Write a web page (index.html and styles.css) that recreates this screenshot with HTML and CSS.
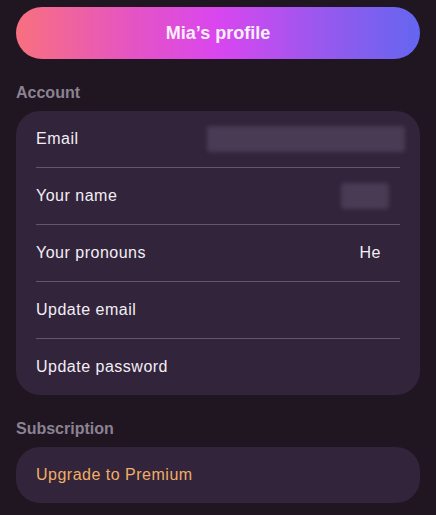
FILE: index.html
```html
<!DOCTYPE html>
<html lang="en">
<head>
<meta charset="utf-8">
<title>Mia’s profile</title>
<link rel="stylesheet" href="styles.css">
</head>
<body>
<main class="page">
  <header class="profile-btn">Mia’s profile</header>

  <section class="section">
    <h2 class="section-title">Account</h2>
    <div class="card">
      <div class="row">
        <span class="row-label">Email</span>
        <span class="blur blur-email"></span>
      </div>
      <div class="row">
        <span class="row-label">Your name</span>
        <span class="blur blur-name"></span>
      </div>
      <div class="row">
        <span class="row-label">Your pronouns</span>
        <span class="row-value">He</span>
      </div>
      <div class="row">
        <span class="row-label">Update email</span>
      </div>
      <div class="row">
        <span class="row-label">Update password</span>
      </div>
    </div>
  </section>

  <section class="section">
    <h2 class="section-title">Subscription</h2>
    <div class="card">
      <div class="row row-single">
        <span class="row-label premium">Upgrade to Premium</span>
      </div>
    </div>
  </section>
</main>
</body>
</html>
```

FILE: styles.css
```css
* { box-sizing: border-box; }

html, body {
  margin: 0;
  background: #1f1621;
}

body {
  font-family: "Liberation Sans", Arial, sans-serif;
  color: #f3eef6;
}

.page {
  padding: 7px 16px 0;
  display: flex;
  flex-direction: column;
}

.profile-btn {
  height: 52px;
  border-radius: 26px;
  background: linear-gradient(90deg, #f8707f 0%, #e453c6 30%, #d946ef 50%, #9a58ee 75%, #6466f0 100%);
  color: #fbeffc;
  font-weight: bold;
  font-size: 18px;
  display: flex;
  align-items: center;
  justify-content: center;
}

.section {
  margin-top: 24px;
}

.section-title {
  margin: 0 0 8px;
  font-size: 16px;
  line-height: 20px;
  font-weight: bold;
  color: #8b8292;
}

.card {
  background: #32243a;
  border-radius: 24px;
  display: flex;
  flex-direction: column;
}

.row {
  height: 57px;
  margin: 0 20px;
  border-bottom: 1px solid #655470;
  display: flex;
  align-items: center;
  justify-content: space-between;
  padding-bottom: 1px;
}

.row:last-child {
  border-bottom: none;
  height: 56px;
  padding-bottom: 0;
}

.row-single {
  height: 55px;
}

.row-label {
  font-size: 16px;
  letter-spacing: 0.5px;
  color: #f3eef6;
}

.row-value {
  font-size: 16px;
  letter-spacing: 0.5px;
  color: #f3eef6;
  margin-right: 19px;
}

.premium {
  color: #f1ae66;
}

.blur {
  display: block;
  background: #4a3b55;
  filter: blur(2px);
  border-radius: 3px;
}

.blur-email {
  width: 198px;
  height: 26px;
  margin-right: -5px;
}

.blur-name {
  width: 48px;
  height: 26px;
  margin-right: 11px;
}
```
